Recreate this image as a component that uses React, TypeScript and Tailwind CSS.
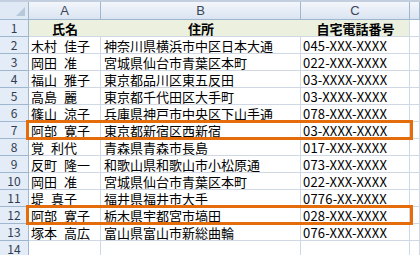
interface Row {
  name: string;
  address: string;
  phone: string;
  marked?: boolean;
}

const rows: Row[] = [
  { name: "木村 佳子", address: "神奈川県横浜市中区日本大通", phone: "045-XXX-XXXX" },
  { name: "岡田 准", address: "宮城県仙台市青葉区本町", phone: "022-XXX-XXXX" },
  { name: "福山 雅子", address: "東京都品川区東五反田", phone: "03-XXXX-XXXX" },
  { name: "高島 麗", address: "東京都千代田区大手町", phone: "03-XXXX-XXXX" },
  { name: "篠山 涼子", address: "兵庫県神戸市中央区下山手通", phone: "078-XXX-XXXX" },
  { name: "阿部 寛子", address: "東京都新宿区西新宿", phone: "03-XXXX-XXXX", marked: true },
  { name: "覚 利代", address: "青森県青森市長島", phone: "017-XXX-XXXX" },
  { name: "反町 隆一", address: "和歌山県和歌山市小松原通", phone: "073-XXX-XXXX" },
  { name: "岡田 准", address: "宮城県仙台市青葉区本町", phone: "022-XXX-XXXX" },
  { name: "堤 真子", address: "福井県福井市大手", phone: "0776-XX-XXXX" },
  { name: "阿部 寛子", address: "栃木県宇都宮市塙田", phone: "028-XXX-XXXX", marked: true },
  { name: "塚本 高広", address: "富山県富山市新総曲輪", phone: "076-XXX-XXXX" },
  { name: "", address: "", phone: "" },
];

const cols = "grid grid-cols-[29px_72px_200px_109px_1fr]";
const cell = "h-full border-r border-b border-[#d0d7e5] flex items-center px-[2px] whitespace-pre overflow-hidden";
const rowHead =
  "h-full border-r border-b border-[#9eb6ce] bg-[#e4ecf7] flex items-center justify-center text-[12px] text-[#2f3d52]";

export default function App() {
  return (
    <div className="w-[420px] h-[255px] overflow-hidden bg-white text-[13px] text-black font-['Noto_Sans_CJK_JP',sans-serif] leading-none">
      {/* column headers */}
      <div className={`${cols} h-[20px] border-t-2 border-[#c3cfde]`}>
        <div className="relative h-full border-r border-b border-[#9eb6ce] bg-[#dfe8f5]">
          <svg className="absolute right-[3px] bottom-[3px]" width="9" height="9" viewBox="0 0 9 9">
            <path d="M9 0 L9 9 L0 9 Z" fill="#b7c8dc" />
          </svg>
        </div>
        {["A", "B", "C", ""].map((c, i) => (
          <div
            key={i}
            className="h-full border-r border-b border-[#9eb6ce] bg-gradient-to-b from-[#f3f6fb] to-[#dae4f1] flex items-center justify-center text-[13px] text-[#3a4658] font-['Liberation_Sans',sans-serif]"
          >
            {c}
          </div>
        ))}
      </div>

      {/* header row */}
      <div className={`${cols} h-[17px]`}>
        <div className={rowHead}>1</div>
        <div className="col-span-3 h-full border-r border-b border-[#d0d7e5] bg-[#ebf1de] grid grid-cols-[72px_200px_109px] font-bold">
          <div className="flex items-center justify-center">氏名</div>
          <div className="flex items-center justify-center">住所</div>
          <div className="flex items-center justify-center">自宅電話番号</div>
        </div>
        <div className={cell} />
      </div>

      {rows.map((r, i) => (
        <div key={i} className={`${cols} relative h-[17px]`}>
          <div className={rowHead}>{i + 2}</div>
          <div className={`${cell} pl-[2px] [word-spacing:4px]`}>{r.name}</div>
          <div className={`${cell} pl-[3px]`}>{r.address}</div>
          <div className={`${cell} text-[13px] tracking-[0.2px]`}>{r.phone}</div>
          <div className={cell} />
          {/* orange highlight box over the row */}
          {r.marked && (
            <div className="absolute z-10 left-[26px] top-[-2px] w-[387px] h-[20px] border-[3px] border-[#e46c0a] pointer-events-none" />
          )}
        </div>
      ))}
    </div>
  );
}
